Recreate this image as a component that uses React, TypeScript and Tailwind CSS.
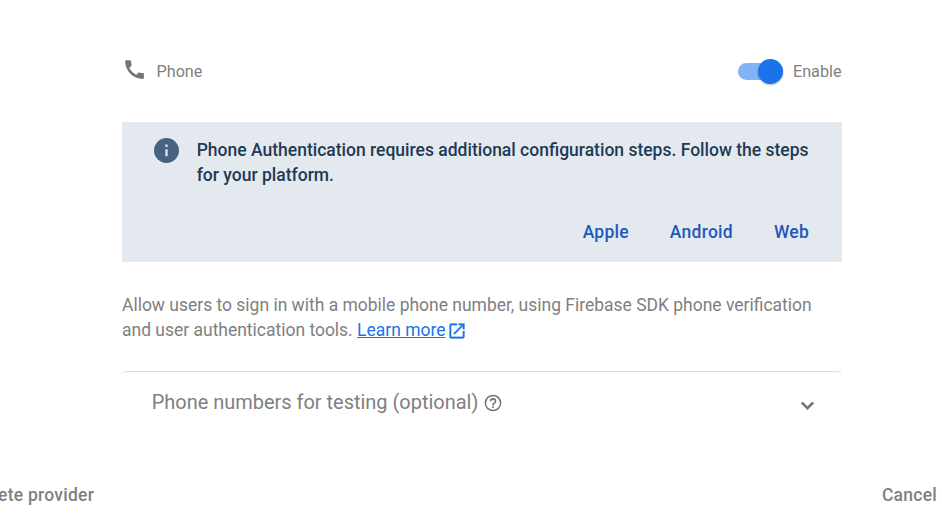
import React from 'react';

export default function App() {
  return (
    <main className="h-[522px] w-[942px] overflow-hidden bg-white pt-[58px] font-['Roboto',sans-serif] text-[#808080]">
      <div className="ml-[122px] w-[720px]">
        <header className="flex h-[26px] items-center justify-between">
          <div className="flex items-center">
            <svg width="25" height="25" viewBox="0 0 24 24" fill="#757575" className="mb-[3px] shrink-0">
              <path d="M20.01 15.38c-1.23 0-2.42-.2-3.53-.56-.35-.12-.74-.03-1.01.24l-1.57 1.97c-2.83-1.35-5.48-3.9-6.89-6.83l1.95-1.66c.27-.28.35-.67.24-1.02-.37-1.11-.56-2.3-.56-3.53 0-.54-.45-.99-.99-.99H4.19C3.65 3 3 3.24 3 3.99 3 13.28 10.73 21 20.01 21c.71 0 .99-.63.99-1.18v-3.45c0-.54-.45-.99-.99-.99z" />
            </svg>
            <span className="mt-px ml-[9.5px] text-[16.2px] leading-6">Phone</span>
          </div>
          <div className="flex items-center">
            <div className="flex h-[17px] w-[45px] items-center justify-end rounded-full bg-[#82b1f4]">
              <span className="size-[25px] shrink-0 rounded-full bg-[#1a73e8] shadow-[0_1px_2px_rgba(0,0,0,0.3)]" />
            </div>
            <span className="mt-px mr-[0.5px] ml-[9.5px] text-[16.2px] leading-6">Enable</span>
          </div>
        </header>
        <section className="mt-[38px] h-[140px] bg-[#e4e9f0] pt-[15px] pl-[32px]">
          <div className="flex">
            <svg width="25" height="25" viewBox="2 2 20 20" className="mt-[0.5px] shrink-0" fill="#476282">
              <circle cx="12" cy="12" r="10" />
              <path fill="#e4e9f0" d="M11.1 11h1.8v5.6h-1.8zM11.1 7.2h1.8v2h-1.8z" />
            </svg>
            <p className="mt-px ml-[17.7px] whitespace-nowrap text-[17.5px] leading-[25px] font-medium text-[#1f3a54]">
              Phone Authentication requires additional configuration steps. Follow the steps
              <br />for your platform.
            </p>
          </div>
          <nav className="mt-[32px] mr-[33px] flex justify-end gap-[41px] text-[17.5px] leading-[25px] font-medium tracking-[0.25px] text-[#1f58bd]">
            <span>Apple</span><span>Android</span><span>Web</span>
          </nav>
        </section>
        <p className="mt-[31px] whitespace-nowrap text-[17.48px] leading-[25px]">
          Allow users to sign in with a mobile phone number, using Firebase SDK phone verification
          <br />and user authentication tools. <a className="text-[#1a73e8] underline">Learn more</a>
          <svg width="20" height="20" viewBox="0 0 24 24" fill="#1a73e8" stroke="#1a73e8" strokeWidth="0.3" className="ml-[1.5px] inline-block align-[-5px]">
            <path d="M19 19H5V5h7V3H5a2 2 0 0 0-2 2v14a2 2 0 0 0 2 2h14c1.1 0 2-.9 2-2v-7h-2v7zM14 3v2h3.59l-9.83 9.83 1.41 1.41L19 6.41V10h2V3h-7z" />
          </svg>
        </p>
        <section className="mt-[28px] flex h-[64px] items-center justify-between rounded-t-[5px] border-t border-[#dadce0] pr-[22.5px] pl-[29.7px]">
          <div className="mb-[3px] flex items-center">
            <span className="text-[19.97px] leading-[28px]">Phone numbers for testing (optional)</span>
            <svg width="20" height="20" viewBox="0 0 24 24" fill="#757575" className="mt-[2px] ml-[5px]">
              <path d="M11 18h2v-2h-2v2zm1-16a10 10 0 1 0 0 20 10 10 0 0 0 0-20zm0 18.2a8.2 8.2 0 1 1 0-16.4 8.2 8.2 0 0 1 0 16.4zm0-14.2a4 4 0 0 0-4 4h2a2 2 0 1 1 4 0c0 2-3 1.75-3 5h2c0-2.25 3-2.5 3-5a4 4 0 0 0-4-4z" />
            </svg>
          </div>
          <svg width="25" height="25" viewBox="0 0 24 24" fill="#757575" stroke="#757575" strokeWidth="0.7" className="mt-[3px]">
            <path d="M7.41 8.59 12 13.17l4.59-4.58L18 10l-6 6-6-6z" />
          </svg>
        </section>
      </div>
      <footer className="mt-[48px] flex justify-between text-[17.5px] leading-[25px] font-medium tracking-[0.25px]">
        <span className="-ml-[28px]">Delete provider</span><span className="mr-[5px]">Cancel</span>
      </footer>
    </main>
  );
}
